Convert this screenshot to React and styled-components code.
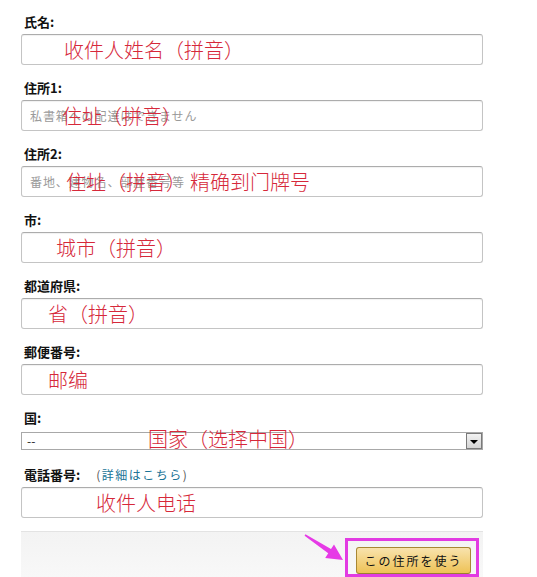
import styled, { createGlobalStyle } from "styled-components";

const GlobalStyle = createGlobalStyle`
	html, body {
		margin: 0;
		padding: 0;
		background: #fff;
	}
	body {
		font-family: "Noto Sans CJK JP", "Noto Sans CJK SC", sans-serif;
		color: #111;
	}
`;

const fields = [
	{ label: "氏名:", note: "收件人姓名（拼音）", noteLeft: 43 },
	{ label: "住所1:", placeholder: "私書箱への配達はできません", note: "住址（拼音）", noteLeft: 41 },
	{
		label: "住所2:",
		placeholder: "番地、建物名、部屋番号等",
		note: "住址（拼音）\u2009精确到门牌号",
		noteLeft: 45,
	},
	{ label: "市:", note: "城市（拼音）", noteLeft: 35 },
	{ label: "都道府県:", note: "省（拼音）", noteLeft: 27 },
	{ label: "郵便番号:", note: "邮编", noteLeft: 27 },
];

const Page = styled.div`
	width: 537px;
	height: 577px;
	overflow: hidden;
`;

const Form = styled.form`
	width: 462px;
	margin-left: 21px;
	padding-top: 14px;
`;

const Field = styled.div`
	margin-bottom: ${(props) => props.$gap ?? 15}px;
`;

const Label = styled.div`
	display: flex;
	align-items: center;
	height: 16px;
	line-height: 16px;
	padding-left: 3px;
	margin-bottom: ${(props) => props.$space || 4}px;
	font-size: 13px;
	font-weight: bold;
	color: #111;
`;

const HelpLink = styled.span`
	margin-left: 16px;
	font-size: 12px;
	font-weight: normal;
	letter-spacing: 1.5px;
	color: #555;

	a {
		color: #1a7396;
		text-decoration: none;
	}
`;

const Box = styled.div`
	position: relative;
`;

const TextInput = styled.input`
	display: block;
	box-sizing: border-box;
	width: 100%;
	height: 31px;
	margin: 0;
	padding: 0 8px;
	border: 1px solid #c4c4c4;
	border-top-color: #acacac;
	border-radius: 3px;
	box-shadow: inset 0 1px 1px rgba(0, 0, 0, 0.06);
	background: #fff;
	font-family: "Noto Sans CJK JP", sans-serif;
	font-size: 12px;
	letter-spacing: 0.9px;
	outline: none;

	&::placeholder {
		color: #9a9a9a;
	}
`;

/* red hand-written notes laid over the inputs */
const Note = styled.span`
	position: absolute;
	top: ${(props) => (props.$top != null ? `${props.$top}px` : "50%")};
	left: ${(props) => props.$left}px;
	transform: ${(props) => (props.$top != null ? "none" : "translateY(-50%)")};
	font-family: "Noto Sans CJK SC", sans-serif;
	font-size: 20px;
	font-weight: 300;
	line-height: 1;
	color: #d6283a;
	white-space: nowrap;
	pointer-events: none;
`;

const Select = styled.div`
	display: flex;
	align-items: center;
	justify-content: space-between;
	box-sizing: border-box;
	height: 18px;
	padding-left: 5px;
	border: 1px solid #a8a8a8;
	background: #fff;
	font-size: 12px;
	line-height: 16px;
	color: #222;
`;

const SelectButton = styled.span`
	display: flex;
	align-items: center;
	justify-content: center;
	box-sizing: border-box;
	width: 16px;
	height: 16px;
	border: 1px solid #7a7a7a;
	background: linear-gradient(#f2f2f2, #d4d4d4);

	&::after {
		content: "";
		border-left: 4px solid transparent;
		border-right: 4px solid transparent;
		border-top: 4px solid #000;
		margin-top: 1px;
	}
`;

const ActionBar = styled.div`
	position: relative;
	display: flex;
	justify-content: flex-end;
	box-sizing: border-box;
	height: 46px;
	margin-top: 13px;
	padding: 6px 4px 0 0;
	border-top: 1px solid #e3e3e3;
	background: linear-gradient(#f3f3f3, #f8f8f8);
`;

const Highlight = styled.div`
	display: flex;
	align-items: flex-start;
	padding: 6px 5px 0 8px;
	border: 3px solid #e23be2;
`;

const SubmitButton = styled.button`
	width: 115px;
	height: 27px;
	margin: 0;
	padding: 0;
	border: 1px solid #a88734;
	border-bottom-color: #9c7e31;
	border-radius: 3px;
	background: linear-gradient(#f8e3ad, #eec256);
	font-family: "Noto Sans CJK JP", sans-serif;
	font-size: 12px;
	letter-spacing: 2px;
	color: #111;
	cursor: pointer;
`;

const Arrow = styled.svg`
	position: absolute;
	left: 279px;
	top: -2px;
`;

export default function App() {
	return (
		<Page>
			<GlobalStyle />
			<Form onSubmit={(e) => e.preventDefault()}>
				{fields.map((field) => (
					<Field key={field.label}>
						<Label>{field.label}</Label>
						<Box>
							<TextInput type="text" placeholder={field.placeholder} />
							<Note $left={field.noteLeft}>{field.note}</Note>
						</Box>
					</Field>
				))}

				<Field $gap={17}>
					<Label $space={6}>国:</Label>
					<Box>
						<Select>
							<span>--</span>
							<SelectButton />
						</Select>
						<Note $left={127} $top={-3}>
							国家（选择中国）
						</Note>
					</Box>
				</Field>

				<Field $gap={0}>
					<Label>
						電話番号:
						<HelpLink>
							(<a href="#">詳細はこちら</a>)
						</HelpLink>
					</Label>
					<Box>
						<TextInput type="tel" />
						<Note $left={75}>收件人电话</Note>
					</Box>
				</Field>

				<ActionBar>
					<Arrow width="48" height="34" viewBox="0 0 48 34">
						<polygon
							points="5.4,4.3 31,19.1 34,14.5 43,30 25.2,27.9 28.2,23.3 4.6,5.7"
							fill="#e63ae6"
						/>
					</Arrow>
					<Highlight>
						<SubmitButton type="submit">この住所を使う</SubmitButton>
					</Highlight>
				</ActionBar>
			</Form>
		</Page>
	);
}
